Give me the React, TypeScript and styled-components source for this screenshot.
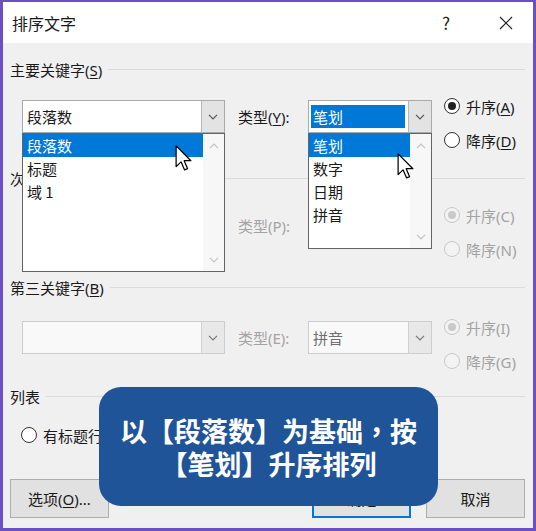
import React from 'react'
import styled, { createGlobalStyle } from 'styled-components'

const GlobalStyle = createGlobalStyle`
  html, body {
    margin: 0;
    padding: 0;
    background: #fff;
  }
  body {
    font-family: "Noto Sans", "Noto Sans CJK SC", sans-serif;
    color: #1a1a1a;
  }
`

const Frame = styled.div`
  position: relative;
  width: 536px;
  height: 531px;
  box-sizing: border-box;
  border: 3px solid #6b4fc4;
  border-top-width: 2px;
  background: #f1f0f1;
  display: flex;
  flex-direction: column;
  overflow: hidden;
`

const TitleBar = styled.div`
  height: 41px;
  background: #fff;
  display: flex;
  align-items: center;
  padding-left: 9px;
  font-size: 16px;
  font-family: "Noto Sans CJK SC", sans-serif;
`

const TitleButton = styled.div<{ $w: number }>`
  width: ${({ $w }) => $w}px;
  height: 100%;
  display: flex;
  align-items: center;
  justify-content: center;
  font-size: 17px;
  color: #222;
`

const Body = styled.div`
  flex: 1;
  display: flex;
  flex-direction: column;
  padding: 0 8px 0 7px;
`

const SectionHeader = styled.div<{ $top: number }>`
  display: flex;
  align-items: center;
  gap: 6px;
  height: 20px;
  margin-top: ${({ $top }) => $top}px;
  font-size: 15px;
  white-space: nowrap;
`

const Rule = styled.div`
  flex: 1;
  height: 1px;
  background: #dcdadc;
`

const Key = styled.span`
  text-decoration: underline;
  text-underline-offset: 2px;
`

const Row = styled.div<{ $top?: number }>`
  display: flex;
  align-items: flex-start;
  height: 89px;
  padding-top: ${({ $top = 0 }) => $top}px;
  box-sizing: border-box;
  padding-left: 12px;
`

const ComboBox = styled.div<{ $w: number; $disabled?: boolean }>`
  position: relative;
  width: ${({ $w }) => $w}px;
  height: 33px;
  margin-top: 21px;
  box-sizing: border-box;
  display: flex;
  border: 1px solid ${({ $disabled }) => ($disabled ? '#cdcdcd' : '#a9a9a9')};
  background: ${({ $disabled }) => ($disabled ? '#f9f9f9' : '#fff')};
`

const Field = styled.div<{ $disabled?: boolean }>`
  flex: 1;
  display: flex;
  align-items: center;
  padding: 0 4px;
  font-size: 15px;
  font-family: "Noto Sans CJK SC", sans-serif;
  color: ${({ $disabled }) => ($disabled ? '#6f6f6f' : '#1a1a1a')};
`

const Selection = styled.div`
  flex: 1;
  height: 23px;
  line-height: 23px;
  margin: 0 -1px 0 -2px;
  padding-left: 2px;
  background: #0078d7;
  color: #fff;
`

const DropButton = styled.div<{ $disabled?: boolean }>`
  width: 22px;
  display: flex;
  align-items: center;
  justify-content: center;
  border-left: 1px solid ${({ $disabled }) => ($disabled ? '#d0d0d0' : '#b8b8b8')};
  background: ${({ $disabled }) => ($disabled ? '#e8e8e8' : '#e3e3e3')};
`

const TypeLabel = styled.div<{ $disabled?: boolean }>`
  width: 70px;
  margin-left: 13px;
  margin-top: 21px;
  line-height: 35px;
  font-size: 15px;
  color: ${({ $disabled }) => ($disabled ? '#a3a3a3' : '#1a1a1a')};
`

const RadioGroup = styled.div`
  display: flex;
  flex-direction: column;
  gap: 4px;
  margin-left: 12px;
  margin-top: 12px;
`

const Radio = styled.div<{ $disabled?: boolean }>`
  display: flex;
  align-items: center;
  gap: 6px;
  height: 30px;
  font-size: 15px;
  white-space: nowrap;
  color: ${({ $disabled }) => ($disabled ? '#a3a3a3' : '#1a1a1a')};
`

const RadioCircle = styled.span<{ $checked?: boolean; $disabled?: boolean }>`
  position: relative;
  width: 16px;
  height: 16px;
  box-sizing: border-box;
  border-radius: 50%;
  border: 1px solid ${({ $disabled }) => ($disabled ? '#c9c9c9' : '#333')};
  background: ${({ $disabled }) => ($disabled ? '#f3f3f3' : '#fff')};

  &::after {
    content: '';
    display: ${({ $checked }) => ($checked ? 'block' : 'none')};
    position: absolute;
    inset: 3px;
    border-radius: 50%;
    background: ${({ $disabled }) => ($disabled ? '#c9c9c9' : '#222')};
  }
`

const DropList = styled.div<{ $h: number }>`
  position: absolute;
  z-index: 5;
  top: calc(100% + 1px);
  left: -1px;
  right: -1px;
  height: ${({ $h }) => $h}px;
  box-sizing: border-box;
  border: 1px solid #646464;
  background: #fff;
  display: flex;
`

const Items = styled.div`
  flex: 1;
  display: flex;
  flex-direction: column;
`

const Item = styled.div<{ $selected?: boolean }>`
  height: 23px;
  line-height: 23px;
  padding-left: 4px;
  font-size: 15px;
  font-family: "Noto Sans CJK SC", sans-serif;
  background: ${({ $selected }) => ($selected ? '#0078d7' : 'transparent')};
  color: ${({ $selected }) => ($selected ? '#fff' : '#1a1a1a')};
`

const ScrollBar = styled.div`
  width: 21px;
  background: #f7f7f7;
  display: flex;
  flex-direction: column;
  justify-content: space-between;
  align-items: center;
  padding: 9px 0 8px;
`

const Pointer = styled.div<{ $x: number; $y: number }>`
  position: absolute;
  left: ${({ $x }) => $x}px;
  top: ${({ $y }) => $y}px;
  line-height: 0;
`

const ListRow = styled.div`
  display: flex;
  gap: 40px;
  height: 30px;
  margin-top: 14px;
  padding-left: 11px;
`

const ButtonRow = styled.div`
  display: flex;
  gap: 15px;
  margin-top: 29px;
`

const Button = styled.div<{ $default?: boolean }>`
  width: 99px;
  height: 39px;
  box-sizing: border-box;
  display: flex;
  align-items: center;
  justify-content: center;
  font-size: 15px;
  background: #e1e1e1;
  border: ${({ $default }) => ($default ? '2px solid #0078d7' : '1px solid #adadad')};
`

const Spacer = styled.div`
  flex: 1;
`

const Callout = styled.div`
  position: absolute;
  z-index: 10;
  left: 96px;
  top: 385px;
  width: 339px;
  height: 119px;
  border-radius: 22px;
  background: #1f5499;
  color: #fff;
  display: flex;
  flex-direction: column;
  align-items: center;
  justify-content: center;
  font-family: "Noto Sans CJK SC", sans-serif;
  font-weight: 700;
  font-size: 27px;
  line-height: 33px;
  white-space: nowrap;
`

const CenteredComma = styled.span`
  font-family: "Noto Sans CJK TC", sans-serif;
`

const Chevron = ({ up, color = '#555' }: { up?: boolean; color?: string }) => (
  <svg width="10" height="6" viewBox="0 0 10 6">
    <path d={up ? 'M1 5.2 L5 1.2 L9 5.2' : 'M1 0.8 L5 4.8 L9 0.8'} fill="none" stroke={color} strokeWidth="1.2" />
  </svg>
)

const CursorIcon = () => (
  <svg width="17" height="26" viewBox="0 0 12 19">
    <path
      d="M0.6 0.6 V15.8 L4.2 12.3 L6.8 18.2 L9 17.3 L6.5 11.5 H11.4 Z"
      fill="#fff"
      stroke="#000"
      strokeWidth="0.9"
      strokeLinejoin="round"
    />
  </svg>
)

const CloseIcon = () => (
  <svg width="14" height="14" viewBox="0 0 14 14">
    <path d="M1 1 L13 13 M13 1 L1 13" stroke="#222" strokeWidth="1.2" />
  </svg>
)

const Scroll = () => (
  <ScrollBar>
    <Chevron up color="#c2c2c2" />
    <Chevron color="#c2c2c2" />
  </ScrollBar>
)

const App: React.FC = () => {
  return (
    <Frame>
      <GlobalStyle />
      <TitleBar>
        排序文字
        <Spacer />
        <TitleButton $w={44}>?</TitleButton>
        <TitleButton $w={16} />
        <TitleButton $w={44}>
          <CloseIcon />
        </TitleButton>
        <TitleButton $w={5} />
      </TitleBar>

      <Body>
        <SectionHeader $top={16}>
          <span>
            主要关键字(<Key>S</Key>)
          </span>
          <Rule />
        </SectionHeader>
        <Row>
          <ComboBox $w={203}>
            <Field>段落数</Field>
            <DropButton>
              <Chevron />
            </DropButton>
            <DropList $h={139}>
              <Items>
                <Item $selected>段落数</Item>
                <Item>标题</Item>
                <Item>域 1</Item>
              </Items>
              <Scroll />
              <Pointer $x={152} $y={11}>
                <CursorIcon />
              </Pointer>
            </DropList>
          </ComboBox>
          <TypeLabel>
            类型(<Key>Y</Key>):
          </TypeLabel>
          <ComboBox $w={124}>
            <Field>
              <Selection>笔划</Selection>
            </Field>
            <DropButton>
              <Chevron />
            </DropButton>
            <DropList $h={116}>
              <Items>
                <Item $selected>笔划</Item>
                <Item>数字</Item>
                <Item>日期</Item>
                <Item>拼音</Item>
              </Items>
              <Scroll />
              <Pointer $x={88} $y={19}>
                <CursorIcon />
              </Pointer>
            </DropList>
          </ComboBox>
          <RadioGroup>
            <Radio>
              <RadioCircle $checked />
              <span>
                升序(<Key>A</Key>)
              </span>
            </Radio>
            <Radio>
              <RadioCircle />
              <span>
                降序(<Key>D</Key>)
              </span>
            </Radio>
          </RadioGroup>
        </Row>

        <SectionHeader $top={0}>
          <span>
            次要关键字(<Key>T</Key>)
          </span>
          <Rule />
        </SectionHeader>
        <Row>
          <ComboBox $w={203} $disabled>
            <Field $disabled />
            <DropButton $disabled>
              <Chevron color="#888" />
            </DropButton>
          </ComboBox>
          <TypeLabel $disabled>类型(P):</TypeLabel>
          <ComboBox $w={124} $disabled>
            <Field $disabled>拼音</Field>
            <DropButton $disabled>
              <Chevron color="#888" />
            </DropButton>
          </ComboBox>
          <RadioGroup>
            <Radio $disabled>
              <RadioCircle $checked $disabled />
              <span>升序(C)</span>
            </Radio>
            <Radio $disabled>
              <RadioCircle $disabled />
              <span>降序(N)</span>
            </Radio>
          </RadioGroup>
        </Row>

        <SectionHeader $top={0}>
          <span>
            第三关键字(<Key>B</Key>)
          </span>
          <Rule />
        </SectionHeader>
        <Row $top={3}>
          <ComboBox $w={203} $disabled>
            <Field $disabled />
            <DropButton $disabled>
              <Chevron color="#777" />
            </DropButton>
          </ComboBox>
          <TypeLabel $disabled>类型(E):</TypeLabel>
          <ComboBox $w={124} $disabled>
            <Field $disabled>拼音</Field>
            <DropButton $disabled>
              <Chevron color="#777" />
            </DropButton>
          </ComboBox>
          <RadioGroup>
            <Radio $disabled>
              <RadioCircle $checked $disabled />
              <span>升序(I)</span>
            </Radio>
            <Radio $disabled>
              <RadioCircle $disabled />
              <span>降序(G)</span>
            </Radio>
          </RadioGroup>
        </Row>

        <SectionHeader $top={0}>
          <span>列表</span>
          <Rule />
        </SectionHeader>
        <ListRow>
          <Radio>
            <RadioCircle />
            <span>
              有标题行(<Key>R</Key>)
            </span>
          </Radio>
          <Radio>
            <RadioCircle $checked />
            <span>
              无标题行(<Key>W</Key>)
            </span>
          </Radio>
        </ListRow>

        <ButtonRow>
          <Button>
            <span>
              选项(<Key>O</Key>)...
            </span>
          </Button>
          <Spacer />
          <Button $default>确定</Button>
          <Button>取消</Button>
        </ButtonRow>
      </Body>

      <Callout>
        <div>
          以【段落数】为基础<CenteredComma>，</CenteredComma>按
        </div>
        <div>【笔划】升序排列</div>
      </Callout>
    </Frame>
  )
}

export default App
